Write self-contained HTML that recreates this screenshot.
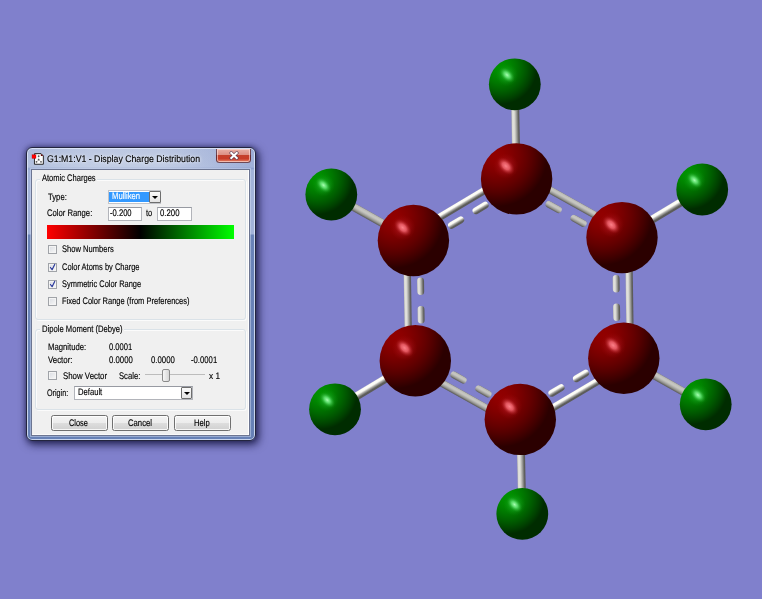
<!DOCTYPE html>
<html><head><meta charset="utf-8"><title>G1:M1:V1 - Display Charge Distribution</title>
<style>
html,body{margin:0;padding:0}
body{width:762px;height:599px;overflow:hidden;background:#8080cc;position:relative;font-family:"Liberation Sans",sans-serif;color:#1a1a1a}
#mol{position:absolute;left:0;top:0}
.abs{position:absolute;box-sizing:border-box}
.t{position:absolute;white-space:pre;transform-origin:0 0;display:block;color:#000;text-rendering:geometricPrecision;-webkit-text-stroke:.15px currentColor;filter:blur(.3px)}
#dlg{left:26px;top:147px;width:230px;height:294px;border:1px solid #23253f;border-radius:6px;
 background:linear-gradient(90deg,rgba(255,255,255,0) 0%,rgba(255,255,255,.2) 28%,rgba(255,255,255,.18) 60%,rgba(110,130,200,.28) 100%) 0 0/100% 21px no-repeat,
 linear-gradient(180deg,#adbbdb 0,#b3c1de 19px,#8ea2cf 21px,#a3b3d9 22px,#a3b3d9 86px,#6a83b8 87px,#6781b6 100%);
 box-shadow:2px 3px 9px 1px rgba(10,10,50,.7), 0 0 5px 0 rgba(10,10,50,.45), inset 0 0 0 1px rgba(225,233,250,.8)}
#client{left:31px;top:169px;width:219px;height:267px;background:#f0f0f0;border:1px solid #6c7591;box-shadow:0 0 0 1px rgba(215,225,245,.45), inset -1px 0 0 #fff, inset 0 -1px 0 #fafafa}
.gb{border:1px solid #dae2e8;border-radius:3px;box-shadow:1px 1px 0 #fbfbfb, inset 1px 1px 0 #fbfbfb}
.edit{background:#fff;border:1px solid #b2b4ba;border-top-color:#979aa2}
.cb{left:48px;width:9px;height:9px;border:1px solid #a0a3a8;background:linear-gradient(135deg,#d9dce2,#f8f8f8);box-shadow:inset 0 0 0 1px #f4f4f4}
.btn{top:415.4px;height:15.6px;width:56.8px;border:1px solid #707070;border-radius:2.5px;background:linear-gradient(#f4f4f4 0%,#ececec 48%,#dddddd 52%,#d0d0d0 100%);box-shadow:inset 0 0 0 1px rgba(255,255,255,.8)}
.dd{border:1px solid #6e6e6e;background:linear-gradient(#fafafa,#e4e4e4);border-radius:1px}
.dd:after{content:"";position:absolute;left:50%;top:50%;margin:-1.1px 0 0 -3.1px;border:3.1px solid transparent;border-top:3.3px solid #000;border-bottom:0}
</style></head>
<body>
<svg id="mol" width="762" height="599" viewBox="0 0 762 599">
<defs>
<linearGradient id="b0" x1="0" y1="0" x2="0" y2="1"><stop offset="0.0" stop-color="rgb(181,181,176)"/><stop offset="0.1" stop-color="rgb(218,218,212)"/><stop offset="0.2" stop-color="rgb(223,223,218)"/><stop offset="0.3" stop-color="rgb(225,225,219)"/><stop offset="0.4" stop-color="rgb(211,211,206)"/><stop offset="0.5" stop-color="rgb(188,188,183)"/><stop offset="0.6" stop-color="rgb(164,164,160)"/><stop offset="0.7" stop-color="rgb(140,140,136)"/><stop offset="0.8" stop-color="rgb(111,111,109)"/><stop offset="0.9" stop-color="rgb(92,92,90)"/><stop offset="1.0" stop-color="rgb(92,92,90)"/></linearGradient>
<linearGradient id="b1" x1="0" y1="0" x2="0" y2="1"><stop offset="0.0" stop-color="rgb(92,92,90)"/><stop offset="0.1" stop-color="rgb(109,109,107)"/><stop offset="0.2" stop-color="rgb(137,137,133)"/><stop offset="0.3" stop-color="rgb(157,157,153)"/><stop offset="0.4" stop-color="rgb(173,173,169)"/><stop offset="0.5" stop-color="rgb(188,188,183)"/><stop offset="0.6" stop-color="rgb(197,197,192)"/><stop offset="0.7" stop-color="rgb(198,198,193)"/><stop offset="0.8" stop-color="rgb(193,193,188)"/><stop offset="0.9" stop-color="rgb(184,184,179)"/><stop offset="1.0" stop-color="rgb(138,138,135)"/></linearGradient>
<linearGradient id="b2" x1="0" y1="0" x2="0" y2="1"><stop offset="0.0" stop-color="rgb(228,228,222)"/><stop offset="0.1" stop-color="rgb(253,253,247)"/><stop offset="0.2" stop-color="rgb(253,253,247)"/><stop offset="0.3" stop-color="rgb(253,253,247)"/><stop offset="0.4" stop-color="rgb(233,233,227)"/><stop offset="0.5" stop-color="rgb(188,188,183)"/><stop offset="0.6" stop-color="rgb(154,154,150)"/><stop offset="0.7" stop-color="rgb(121,121,118)"/><stop offset="0.8" stop-color="rgb(92,92,90)"/><stop offset="0.9" stop-color="rgb(92,92,90)"/><stop offset="1.0" stop-color="rgb(92,92,90)"/></linearGradient>
<linearGradient id="b3" x1="0" y1="0" x2="0" y2="1"><stop offset="0.0" stop-color="rgb(92,92,90)"/><stop offset="0.1" stop-color="rgb(92,92,90)"/><stop offset="0.2" stop-color="rgb(92,92,90)"/><stop offset="0.3" stop-color="rgb(121,121,118)"/><stop offset="0.4" stop-color="rgb(154,154,150)"/><stop offset="0.5" stop-color="rgb(188,188,183)"/><stop offset="0.6" stop-color="rgb(233,233,227)"/><stop offset="0.7" stop-color="rgb(253,253,247)"/><stop offset="0.8" stop-color="rgb(253,253,247)"/><stop offset="0.9" stop-color="rgb(253,253,247)"/><stop offset="1.0" stop-color="rgb(228,228,222)"/></linearGradient>
<linearGradient id="b4" x1="0" y1="0" x2="0" y2="1"><stop offset="0.0" stop-color="rgb(138,138,135)"/><stop offset="0.1" stop-color="rgb(183,183,179)"/><stop offset="0.2" stop-color="rgb(193,193,188)"/><stop offset="0.3" stop-color="rgb(198,198,193)"/><stop offset="0.4" stop-color="rgb(197,197,192)"/><stop offset="0.5" stop-color="rgb(188,188,183)"/><stop offset="0.6" stop-color="rgb(173,173,169)"/><stop offset="0.7" stop-color="rgb(157,157,153)"/><stop offset="0.8" stop-color="rgb(137,137,134)"/><stop offset="0.9" stop-color="rgb(110,110,107)"/><stop offset="1.0" stop-color="rgb(92,92,90)"/></linearGradient>
<linearGradient id="b5" x1="0" y1="0" x2="0" y2="1"><stop offset="0.0" stop-color="rgb(92,92,90)"/><stop offset="0.1" stop-color="rgb(92,92,90)"/><stop offset="0.2" stop-color="rgb(111,111,109)"/><stop offset="0.3" stop-color="rgb(140,140,136)"/><stop offset="0.4" stop-color="rgb(164,164,160)"/><stop offset="0.5" stop-color="rgb(188,188,183)"/><stop offset="0.6" stop-color="rgb(211,211,206)"/><stop offset="0.7" stop-color="rgb(224,224,219)"/><stop offset="0.8" stop-color="rgb(223,223,218)"/><stop offset="0.9" stop-color="rgb(218,218,212)"/><stop offset="1.0" stop-color="rgb(181,181,176)"/></linearGradient>
<linearGradient id="b6" x1="0" y1="0" x2="0" y2="1"><stop offset="0.0" stop-color="rgb(139,139,135)"/><stop offset="0.1" stop-color="rgb(184,184,179)"/><stop offset="0.2" stop-color="rgb(193,193,189)"/><stop offset="0.3" stop-color="rgb(198,198,193)"/><stop offset="0.4" stop-color="rgb(197,197,192)"/><stop offset="0.5" stop-color="rgb(188,188,183)"/><stop offset="0.6" stop-color="rgb(173,173,169)"/><stop offset="0.7" stop-color="rgb(157,157,153)"/><stop offset="0.8" stop-color="rgb(137,137,133)"/><stop offset="0.9" stop-color="rgb(109,109,106)"/><stop offset="1.0" stop-color="rgb(92,92,90)"/></linearGradient>
<linearGradient id="b7" x1="0" y1="0" x2="0" y2="1"><stop offset="0.0" stop-color="rgb(92,92,90)"/><stop offset="0.1" stop-color="rgb(92,92,90)"/><stop offset="0.2" stop-color="rgb(111,111,108)"/><stop offset="0.3" stop-color="rgb(140,140,136)"/><stop offset="0.4" stop-color="rgb(164,164,160)"/><stop offset="0.5" stop-color="rgb(188,188,183)"/><stop offset="0.6" stop-color="rgb(211,211,206)"/><stop offset="0.7" stop-color="rgb(225,225,219)"/><stop offset="0.8" stop-color="rgb(224,224,218)"/><stop offset="0.9" stop-color="rgb(218,218,213)"/><stop offset="1.0" stop-color="rgb(181,181,177)"/></linearGradient>
<linearGradient id="b8" x1="0" y1="0" x2="0" y2="1"><stop offset="0.0" stop-color="rgb(92,92,90)"/><stop offset="0.1" stop-color="rgb(92,92,90)"/><stop offset="0.2" stop-color="rgb(92,92,90)"/><stop offset="0.3" stop-color="rgb(121,121,118)"/><stop offset="0.4" stop-color="rgb(154,154,150)"/><stop offset="0.5" stop-color="rgb(188,188,183)"/><stop offset="0.6" stop-color="rgb(233,233,227)"/><stop offset="0.7" stop-color="rgb(253,253,247)"/><stop offset="0.8" stop-color="rgb(253,253,247)"/><stop offset="0.9" stop-color="rgb(253,253,247)"/><stop offset="1.0" stop-color="rgb(228,228,222)"/></linearGradient>
<linearGradient id="b9" x1="0" y1="0" x2="0" y2="1"><stop offset="0.0" stop-color="rgb(92,92,90)"/><stop offset="0.1" stop-color="rgb(109,109,106)"/><stop offset="0.2" stop-color="rgb(137,137,133)"/><stop offset="0.3" stop-color="rgb(157,157,153)"/><stop offset="0.4" stop-color="rgb(173,173,169)"/><stop offset="0.5" stop-color="rgb(188,188,183)"/><stop offset="0.6" stop-color="rgb(197,197,192)"/><stop offset="0.7" stop-color="rgb(198,198,193)"/><stop offset="0.8" stop-color="rgb(193,193,188)"/><stop offset="0.9" stop-color="rgb(184,184,179)"/><stop offset="1.0" stop-color="rgb(139,139,135)"/></linearGradient>
<linearGradient id="b10" x1="0" y1="0" x2="0" y2="1"><stop offset="0.0" stop-color="rgb(181,181,177)"/><stop offset="0.1" stop-color="rgb(218,218,213)"/><stop offset="0.2" stop-color="rgb(224,224,218)"/><stop offset="0.3" stop-color="rgb(225,225,219)"/><stop offset="0.4" stop-color="rgb(211,211,206)"/><stop offset="0.5" stop-color="rgb(188,188,183)"/><stop offset="0.6" stop-color="rgb(164,164,160)"/><stop offset="0.7" stop-color="rgb(140,140,136)"/><stop offset="0.8" stop-color="rgb(111,111,108)"/><stop offset="0.9" stop-color="rgb(92,92,90)"/><stop offset="1.0" stop-color="rgb(92,92,90)"/></linearGradient>
<linearGradient id="b11" x1="0" y1="0" x2="0" y2="1"><stop offset="0.0" stop-color="rgb(228,228,222)"/><stop offset="0.1" stop-color="rgb(253,253,247)"/><stop offset="0.2" stop-color="rgb(253,253,247)"/><stop offset="0.3" stop-color="rgb(253,253,247)"/><stop offset="0.4" stop-color="rgb(233,233,227)"/><stop offset="0.5" stop-color="rgb(188,188,183)"/><stop offset="0.6" stop-color="rgb(154,154,150)"/><stop offset="0.7" stop-color="rgb(121,121,118)"/><stop offset="0.8" stop-color="rgb(92,92,90)"/><stop offset="0.9" stop-color="rgb(92,92,90)"/><stop offset="1.0" stop-color="rgb(92,92,90)"/></linearGradient>
<radialGradient id="gc" cx="0.225" cy="0.185" r="0.70"><stop offset="0" stop-color="rgb(146,0,0)"/><stop offset="0.144" stop-color="rgb(141,0,0)"/><stop offset="0.29" stop-color="rgb(131,0,0)"/><stop offset="0.43" stop-color="rgb(118,0,0)"/><stop offset="0.6" stop-color="rgb(100,0,0)"/><stop offset="0.72" stop-color="rgb(85,0,0)"/><stop offset="0.866" stop-color="rgb(64,0,0)"/><stop offset="1" stop-color="rgb(43,0,0)"/></radialGradient>
<radialGradient id="gh" cx="0.225" cy="0.185" r="0.70"><stop offset="0" stop-color="rgb(0,146,0)"/><stop offset="0.144" stop-color="rgb(0,142,0)"/><stop offset="0.29" stop-color="rgb(0,132,0)"/><stop offset="0.43" stop-color="rgb(0,119,0)"/><stop offset="0.6" stop-color="rgb(0,100,0)"/><stop offset="0.72" stop-color="rgb(0,85,0)"/><stop offset="0.866" stop-color="rgb(0,65,0)"/><stop offset="1" stop-color="rgb(0,44,0)"/></radialGradient>
<radialGradient id="sc"><stop offset="0" stop-color="#fb8088" stop-opacity="1"/><stop offset="0.4" stop-color="#ee626c" stop-opacity=".85"/><stop offset="1" stop-color="#a01010" stop-opacity="0"/></radialGradient>
<radialGradient id="sh"><stop offset="0" stop-color="#a8ffb2" stop-opacity="1"/><stop offset="0.4" stop-color="#5ee06e" stop-opacity=".85"/><stop offset="1" stop-color="#109010" stop-opacity="0"/></radialGradient>
<radialGradient id="sc2"><stop offset="0" stop-color="#d83848" stop-opacity=".55"/><stop offset="0.5" stop-color="#c02030" stop-opacity=".3"/><stop offset="1" stop-color="#a01010" stop-opacity="0"/></radialGradient>
<radialGradient id="sh2"><stop offset="0" stop-color="#40d850" stop-opacity=".55"/><stop offset="0.5" stop-color="#28c038" stop-opacity=".3"/><stop offset="1" stop-color="#109010" stop-opacity="0"/></radialGradient>
</defs>
<rect x="0" y="-4.00" width="94.62" height="8.00" rx="0" fill="url(#b0)" transform="translate(516.60,178.90) rotate(-91.09)"/>
<rect x="0" y="-4.00" width="94.11" height="8.00" rx="0" fill="url(#b1)" transform="translate(413.40,240.50) rotate(-150.74)"/>
<rect x="0" y="-4.00" width="93.52" height="8.00" rx="0" fill="url(#b2)" transform="translate(622.00,237.60) rotate(-30.95)"/>
<rect x="0" y="-4.00" width="93.81" height="8.00" rx="0" fill="url(#b3)" transform="translate(415.30,360.80) rotate(148.87)"/>
<rect x="0" y="-4.00" width="93.98" height="8.00" rx="0" fill="url(#b4)" transform="translate(623.80,358.20) rotate(29.37)"/>
<rect x="0" y="-4.00" width="94.52" height="8.00" rx="0" fill="url(#b5)" transform="translate(520.30,419.40) rotate(88.79)"/>
<rect x="0" y="-3.65" width="120.64" height="7.30" rx="0" fill="url(#b6)" transform="translate(519.81,173.13) rotate(29.11)"/>
<rect x="0" y="-3.50" width="17.50" height="7.00" rx="3.5" fill="url(#b6)" transform="translate(546.04,202.74) rotate(29.11)"/>
<rect x="0" y="-3.50" width="17.50" height="7.00" rx="3.5" fill="url(#b6)" transform="translate(570.94,216.60) rotate(29.11)"/>
<rect x="0" y="-3.65" width="120.61" height="7.30" rx="0" fill="url(#b7)" transform="translate(628.60,237.50) rotate(89.14)"/>
<rect x="0" y="-3.50" width="17.50" height="7.00" rx="3.5" fill="url(#b7)" transform="translate(616.06,275.00) rotate(89.14)"/>
<rect x="0" y="-3.50" width="17.50" height="7.00" rx="3.5" fill="url(#b7)" transform="translate(616.48,303.50) rotate(89.14)"/>
<rect x="0" y="-3.65" width="120.24" height="7.30" rx="0" fill="url(#b8)" transform="translate(627.16,363.88) rotate(149.40)"/>
<rect x="0" y="-3.50" width="17.50" height="7.00" rx="3.5" fill="url(#b8)" transform="translate(588.54,371.50) rotate(149.40)"/>
<rect x="0" y="-3.50" width="17.50" height="7.00" rx="3.5" fill="url(#b8)" transform="translate(564.01,386.00) rotate(149.40)"/>
<rect x="0" y="-3.65" width="120.25" height="7.30" rx="0" fill="url(#b9)" transform="translate(517.08,425.16) rotate(-150.83)"/>
<rect x="0" y="-3.50" width="17.50" height="7.00" rx="3.5" fill="url(#b9)" transform="translate(491.05,395.63) rotate(-150.83)"/>
<rect x="0" y="-3.50" width="17.50" height="7.00" rx="3.5" fill="url(#b9)" transform="translate(466.17,381.74) rotate(-150.83)"/>
<rect x="0" y="-3.65" width="120.32" height="7.30" rx="0" fill="url(#b10)" transform="translate(408.70,360.90) rotate(-90.90)"/>
<rect x="0" y="-3.50" width="17.50" height="7.00" rx="3.5" fill="url(#b10)" transform="translate(421.21,323.54) rotate(-90.90)"/>
<rect x="0" y="-3.50" width="17.50" height="7.00" rx="3.5" fill="url(#b10)" transform="translate(420.76,295.05) rotate(-90.90)"/>
<rect x="0" y="-3.65" width="120.19" height="7.30" rx="0" fill="url(#b11)" transform="translate(410.02,234.83) rotate(-30.83)"/>
<rect x="0" y="-3.50" width="17.50" height="7.00" rx="3.5" fill="url(#b11)" transform="translate(448.58,227.07) rotate(-30.83)"/>
<rect x="0" y="-3.50" width="17.50" height="7.00" rx="3.5" fill="url(#b11)" transform="translate(473.05,212.46) rotate(-30.83)"/>
<circle cx="516.6" cy="178.9" r="35.7" fill="url(#gc)"/><circle cx="505.89" cy="166.05" r="12.85" fill="url(#sc2)"/><ellipse cx="505.89" cy="166.05" rx="10.71" ry="6.78" fill="url(#sc)" transform="rotate(45 505.89 166.05)"/>
<circle cx="413.4" cy="240.5" r="35.7" fill="url(#gc)"/><circle cx="402.69" cy="227.65" r="12.85" fill="url(#sc2)"/><ellipse cx="402.69" cy="227.65" rx="10.71" ry="6.78" fill="url(#sc)" transform="rotate(45 402.69 227.65)"/>
<circle cx="622.0" cy="237.6" r="35.7" fill="url(#gc)"/><circle cx="611.29" cy="224.75" r="12.85" fill="url(#sc2)"/><ellipse cx="611.29" cy="224.75" rx="10.71" ry="6.78" fill="url(#sc)" transform="rotate(45 611.29 224.75)"/>
<circle cx="415.3" cy="360.8" r="35.7" fill="url(#gc)"/><circle cx="404.59" cy="347.95" r="12.85" fill="url(#sc2)"/><ellipse cx="404.59" cy="347.95" rx="10.71" ry="6.78" fill="url(#sc)" transform="rotate(45 404.59 347.95)"/>
<circle cx="623.8" cy="358.2" r="35.7" fill="url(#gc)"/><circle cx="613.09" cy="345.35" r="12.85" fill="url(#sc2)"/><ellipse cx="613.09" cy="345.35" rx="10.71" ry="6.78" fill="url(#sc)" transform="rotate(45 613.09 345.35)"/>
<circle cx="520.3" cy="419.4" r="35.7" fill="url(#gc)"/><circle cx="509.59" cy="406.55" r="12.85" fill="url(#sc2)"/><ellipse cx="509.59" cy="406.55" rx="10.71" ry="6.78" fill="url(#sc)" transform="rotate(45 509.59 406.55)"/>
<circle cx="514.8" cy="84.3" r="25.9" fill="url(#gh)"/><circle cx="507.03" cy="74.98" r="11.38" fill="url(#sh2)"/><ellipse cx="507.03" cy="74.98" rx="9.48" ry="6.00" fill="url(#sh)" transform="rotate(45 507.03 74.98)"/>
<circle cx="331.3" cy="194.5" r="25.9" fill="url(#gh)"/><circle cx="323.53" cy="185.18" r="11.38" fill="url(#sh2)"/><ellipse cx="323.53" cy="185.18" rx="9.48" ry="6.00" fill="url(#sh)" transform="rotate(45 323.53 185.18)"/>
<circle cx="702.2" cy="189.5" r="25.9" fill="url(#gh)"/><circle cx="694.43" cy="180.18" r="11.38" fill="url(#sh2)"/><ellipse cx="694.43" cy="180.18" rx="9.48" ry="6.00" fill="url(#sh)" transform="rotate(45 694.43 180.18)"/>
<circle cx="335.0" cy="409.3" r="25.9" fill="url(#gh)"/><circle cx="327.23" cy="399.98" r="11.38" fill="url(#sh2)"/><ellipse cx="327.23" cy="399.98" rx="9.48" ry="6.00" fill="url(#sh)" transform="rotate(45 327.23 399.98)"/>
<circle cx="705.7" cy="404.3" r="25.9" fill="url(#gh)"/><circle cx="697.93" cy="394.98" r="11.38" fill="url(#sh2)"/><ellipse cx="697.93" cy="394.98" rx="9.48" ry="6.00" fill="url(#sh)" transform="rotate(45 697.93 394.98)"/>
<circle cx="522.3" cy="513.9" r="25.9" fill="url(#gh)"/><circle cx="514.53" cy="504.58" r="11.38" fill="url(#sh2)"/><ellipse cx="514.53" cy="504.58" rx="9.48" ry="6.00" fill="url(#sh)" transform="rotate(45 514.53 504.58)"/>
</svg>
<div id="dlg" class="abs"></div>
<div class="abs" style="left:216px;top:148.6px;width:34.5px;height:14.2px;border:1px solid rgba(70,40,60,.75);border-top:0;border-radius:0 0 3.5px 3.5px;background:linear-gradient(#e9b0a6 0%,#dc8f84 45%,#c4402c 50%,#c93c28 75%,#e58a6e 100%);box-shadow:inset 0 0 0 1px rgba(255,225,220,.6)"></div>
<svg class="abs" style="left:229px;top:150.5px" width="10" height="9" viewBox="0 0 10 9"><path d="M2.3 2.0 L7.7 7.0 M7.7 2.0 L2.3 7.0" stroke="#4a3550" stroke-opacity=".85" stroke-width="3.3" stroke-linecap="square" fill="none"/><path d="M2.3 2.0 L7.7 7.0 M7.7 2.0 L2.3 7.0" stroke="#fff" stroke-width="2.1" stroke-linecap="square" fill="none"/></svg>
<svg class="abs" style="left:28px;top:149px" width="24" height="20" viewBox="0 0 24 20"><path d="M6.45 4.65 H13.1 L15.35 6.9 V15.25 H6.45 Z" fill="#fdfdfd" stroke="#1c1c1c" stroke-width=".95" stroke-linejoin="round"/><path d="M12.9 4.7 L15.3 7.1 H12.9 Z" fill="#650a0a"/><rect x="3.95" y="5.6" width="4.1" height="3.9" fill="#ff0000" stroke="#5a1520" stroke-opacity=".5" stroke-width=".35"/><path d="M10.65 7.2 V10.7 L8.5 12.8 M10.65 10.7 L13 12.8" stroke="#c4c4c4" stroke-width=".55" fill="none"/><g fill="#585858"><circle cx="10.65" cy="7.2" r=".9"/><circle cx="10.65" cy="10.7" r=".9"/><circle cx="8.5" cy="12.85" r=".9"/><circle cx="13" cy="12.85" r=".9"/></g></svg>
<div id="client" class="abs"></div>
<div class="abs gb" style="left:35px;top:179px;width:211px;height:141px"></div>
<div class="abs" style="left:40px;top:176px;width:57px;height:8px;background:#f0f0f0"></div>
<div class="abs gb" style="left:35px;top:329px;width:211px;height:81px"></div>
<div class="abs" style="left:40px;top:326px;width:84px;height:8px;background:#f0f0f0"></div>
<div class="abs edit" style="left:107.9px;top:190.4px;width:53px;height:13.4px;border-color:#c2c4c9"></div>
<div class="abs" style="left:109.3px;top:192px;width:39.5px;height:10.2px;background:#3399ff"></div>
<div class="abs dd" style="left:149.1px;top:191px;width:11.5px;height:12.4px"></div>
<div class="abs edit" style="left:107.9px;top:207.3px;width:34.4px;height:13.6px"></div>
<div class="abs edit" style="left:157.3px;top:207.3px;width:34.4px;height:13.6px"></div>
<div class="abs" style="left:46.9px;top:225px;width:187.6px;height:14px;background:linear-gradient(90deg,#ff0000 0%,#000 50%,#00ff00 100%)"></div>
<div class="abs cb" style="top:245px"></div>
<div class="abs cb" style="top:263px"></div>
<svg class="abs" style="left:48px;top:263px" width="10" height="10" viewBox="0 0 10 10"><path d="M2.4 4.5 L4.1 6.7 L6.7 1.4" stroke="#2c3b9c" stroke-width="1.2" fill="none" stroke-linecap="round" stroke-linejoin="round"/></svg>
<div class="abs cb" style="top:280px"></div>
<svg class="abs" style="left:48px;top:280px" width="10" height="10" viewBox="0 0 10 10"><path d="M2.4 4.5 L4.1 6.7 L6.7 1.4" stroke="#2c3b9c" stroke-width="1.2" fill="none" stroke-linecap="round" stroke-linejoin="round"/></svg>
<div class="abs cb" style="top:297px"></div>
<div class="abs cb" style="top:371px"></div>
<div class="abs" style="left:145px;top:374.3px;width:60px;height:1.2px;background:#bcbcbc"></div>
<div class="abs" style="left:162px;top:369px;width:8px;height:13px;border:1px solid #8a8a8a;border-radius:2px;background:linear-gradient(90deg,#f6f6f6,#d6d6d6)"></div>
<div class="abs edit" style="left:74px;top:386.2px;width:118.6px;height:13.6px"></div>
<div class="abs dd" style="left:181.2px;top:386.8px;width:11.3px;height:12.4px"></div>
<div class="abs btn" style="left:50.9px"></div>
<div class="abs btn" style="left:112.3px"></div>
<div class="abs btn" style="left:174.2px"></div>
<span class="t" style="left:41.7px;top:173.31px;font-size:9.5px;line-height:11.4px;transform:scale(0.793,1);transform-origin:0 8.99px;">Atomic Charges</span>
<span class="t" style="left:47.6px;top:192.31px;font-size:9.5px;line-height:11.4px;transform:scale(0.809,1);transform-origin:0 8.99px;">Type:</span>
<span class="t" style="left:46.8px;top:208.31px;font-size:9.5px;line-height:11.4px;transform:scale(0.809,1);transform-origin:0 8.99px;">Color Range:</span>
<span class="t" style="left:146.0px;top:208.31px;font-size:9.5px;line-height:11.4px;transform:scale(0.794,1);transform-origin:0 8.99px;">to</span>
<span class="t" style="left:61.8px;top:244.31px;font-size:9.5px;line-height:11.4px;transform:scale(0.796,1);transform-origin:0 8.99px;">Show Numbers</span>
<span class="t" style="left:61.9px;top:262.31px;font-size:9.5px;line-height:11.4px;transform:scale(0.789,1);transform-origin:0 8.99px;">Color Atoms by Charge</span>
<span class="t" style="left:61.8px;top:279.31px;font-size:9.5px;line-height:11.4px;transform:scale(0.785,1);transform-origin:0 8.99px;">Symmetric Color Range</span>
<span class="t" style="left:61.8px;top:296.31px;font-size:9.5px;line-height:11.4px;transform:scale(0.792,1);transform-origin:0 8.99px;">Fixed Color Range (from Preferences)</span>
<span class="t" style="left:41.7px;top:324.31px;font-size:9.5px;line-height:11.4px;transform:scale(0.804,1);transform-origin:0 8.99px;">Dipole Moment (Debye)</span>
<span class="t" style="left:48.0px;top:342.31px;font-size:9.5px;line-height:11.4px;transform:scale(0.812,1);transform-origin:0 8.99px;">Magnitude:</span>
<span class="t" style="left:109.0px;top:342.31px;font-size:9.5px;line-height:11.4px;transform:scale(0.802,1);transform-origin:0 8.99px;">0.0001</span>
<span class="t" style="left:48.0px;top:355.31px;font-size:9.5px;line-height:11.4px;transform:scale(0.828,1);transform-origin:0 8.99px;">Vector:</span>
<span class="t" style="left:109.0px;top:355.31px;font-size:9.5px;line-height:11.4px;transform:scale(0.819,1);transform-origin:0 8.99px;">0.0000</span>
<span class="t" style="left:150.7px;top:355.31px;font-size:9.5px;line-height:11.4px;transform:scale(0.822,1);transform-origin:0 8.99px;">0.0000</span>
<span class="t" style="left:190.7px;top:355.31px;font-size:9.5px;line-height:11.4px;transform:scale(0.813,1);transform-origin:0 8.99px;">-0.0001</span>
<span class="t" style="left:62.5px;top:371.31px;font-size:9.5px;line-height:11.4px;transform:scale(0.827,1);transform-origin:0 8.99px;">Show Vector</span>
<span class="t" style="left:118.9px;top:371.31px;font-size:9.5px;line-height:11.4px;transform:scale(0.807,1);transform-origin:0 8.99px;">Scale:</span>
<span class="t" style="left:209.3px;top:371.31px;font-size:9.5px;line-height:11.4px;transform:scale(0.867,1);transform-origin:0 8.99px;">x 1</span>
<span class="t" style="left:47.2px;top:388.31px;font-size:9.5px;line-height:11.4px;transform:scale(0.758,1);transform-origin:0 8.99px;">Origin:</span>
<span class="t" style="left:77.7px;top:387.31px;font-size:9.5px;line-height:11.4px;transform:scale(0.804,1);transform-origin:0 8.99px;">Default</span>
<span class="t" style="left:110.2px;top:208.31px;font-size:9.5px;line-height:11.4px;transform:scale(0.802,1);transform-origin:0 8.99px;">-0.200</span>
<span class="t" style="left:160.0px;top:208.31px;font-size:9.5px;line-height:11.4px;transform:scale(0.820,1);transform-origin:0 8.99px;">0.200</span>
<span class="t" style="left:111.9px;top:191.31px;font-size:9.5px;line-height:11.4px;transform:scale(0.806,1);transform-origin:0 8.99px;color:#fff;">Mulliken</span>
<span class="t" style="left:69.3px;top:418.31px;font-size:9.5px;line-height:11.4px;transform:scale(0.778,1);transform-origin:0 8.99px;">Close</span>
<span class="t" style="left:127.7px;top:418.31px;font-size:9.5px;line-height:11.4px;transform:scale(0.811,1);transform-origin:0 8.99px;">Cancel</span>
<span class="t" style="left:194.3px;top:418.31px;font-size:9.5px;line-height:11.4px;transform:scale(0.803,1);transform-origin:0 8.99px;">Help</span>
<span class="t" style="left:47.2px;top:154.21px;font-size:9.6px;line-height:11.52px;transform:scale(0.911,1);transform-origin:0 9.09px;text-shadow:0 0 3px rgba(255,255,255,.9),0 0 6px rgba(255,255,255,.6);">G1:M1:V1 - Display Charge Distribution</span>
</body></html>
